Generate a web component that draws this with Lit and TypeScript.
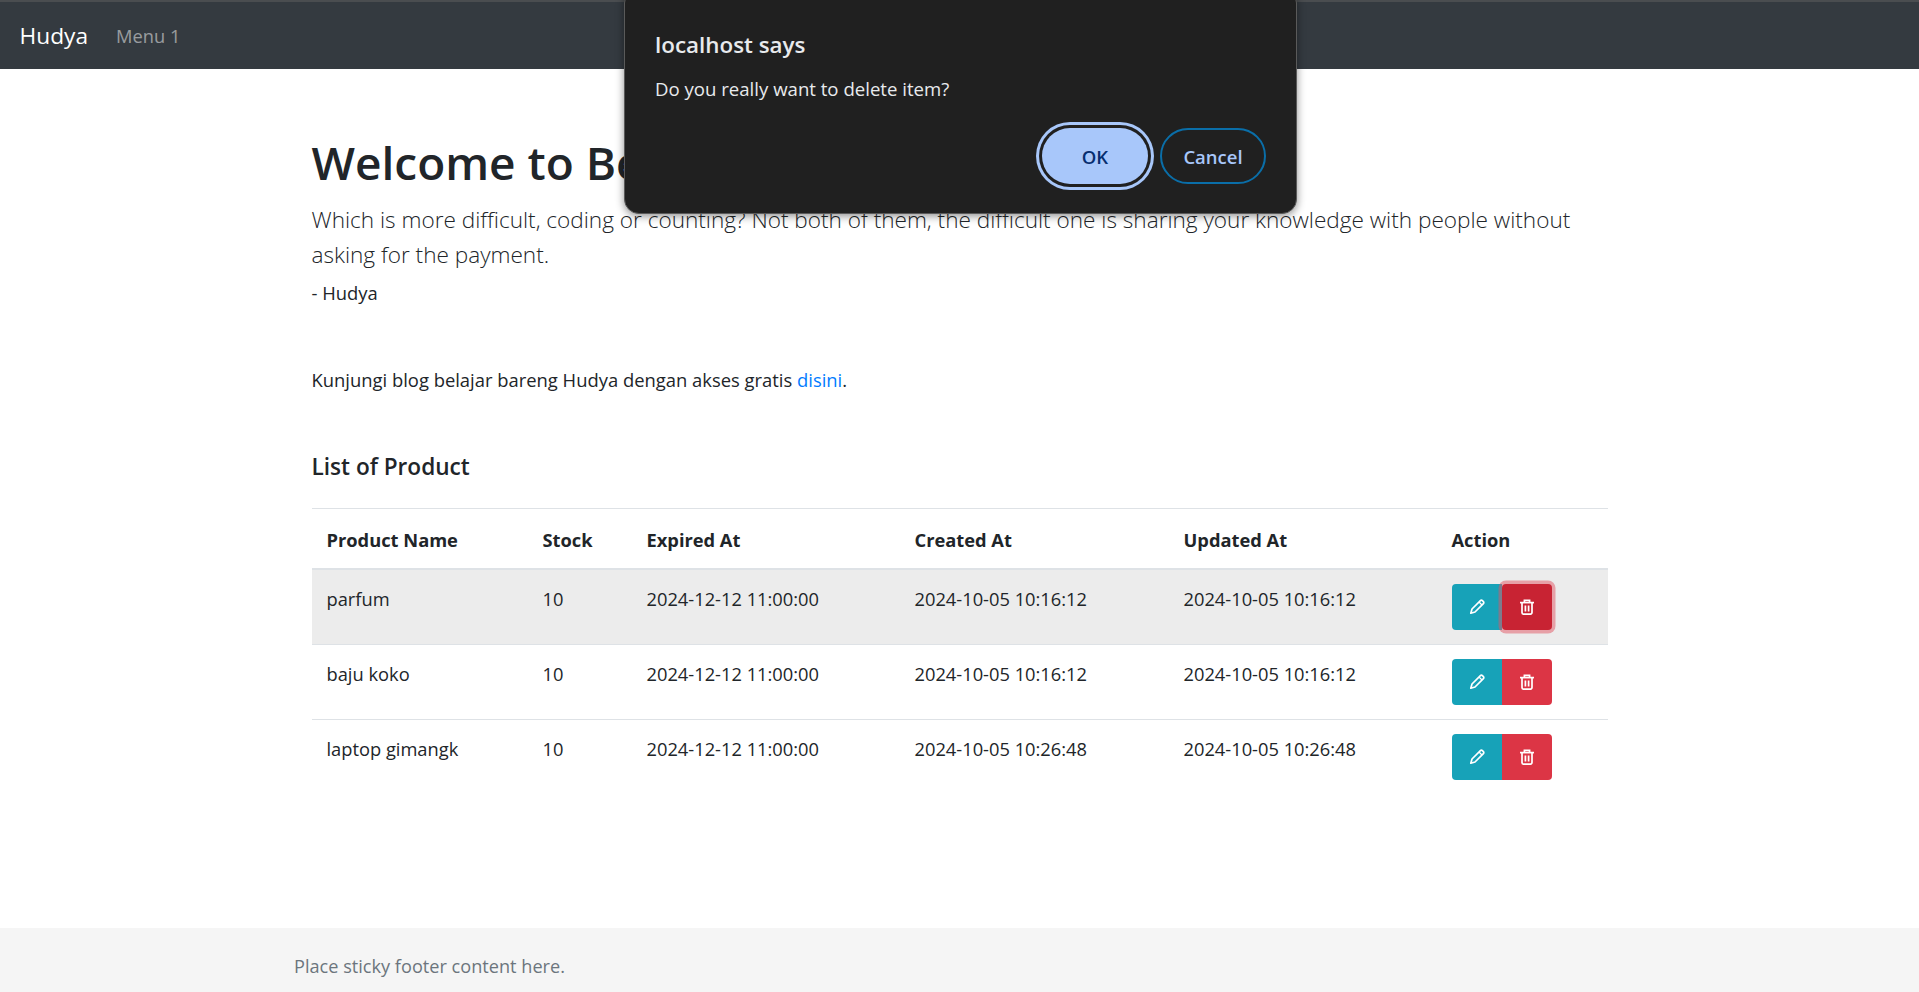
import { LitElement, html, css, svg } from "lit";
import { customElement } from "lit/decorators.js";

const rows = [
  ["parfum", "10", "2024-12-12 11:00:00", "2024-10-05 10:16:12", "2024-10-05 10:16:12"],
  ["baju koko", "10", "2024-12-12 11:00:00", "2024-10-05 10:16:12", "2024-10-05 10:16:12"],
  ["laptop gimangk", "10", "2024-12-12 11:00:00", "2024-10-05 10:26:48", "2024-10-05 10:26:48"],
];

const pencil = svg`<path d="M1.8 14.2 3 10 11.4 1.6a1.4 1.4 0 0 1 2 0l1 1a1.4 1.4 0 0 1 0 2L6 13z" fill="none" stroke="currentColor" stroke-width="1.7" stroke-linejoin="round"/><path d="M10 3l3 3" fill="none" stroke="currentColor" stroke-width="1.3"/>`;
const trash = svg`<g fill="none" stroke="currentColor" stroke-width="1.7"><path d="M1 3.6h14"/><path d="M5.4 3.6V1.4h5.2v2.2"/><path d="M3 3.6V13.4a1.8 1.8 0 0 0 1.8 1.8h6.4a1.8 1.8 0 0 0 1.8-1.8V3.6"/><path d="M6.4 6.4v6M9.6 6.4v6"/></g>`;

@customElement("app-root")
export class AppRoot extends LitElement {
  static styles = css`
    :host { display: flex; flex-direction: column; min-height: 992px; position: relative; overflow: hidden;
      font-family: "Open Sans", "Noto Sans", sans-serif; font-size: 18.4px; color: #212529; background: #fff; }
    .nav { height: 69px; box-sizing: border-box; background: #343a40; border-top: 2px solid #4a4d50; display: flex; align-items: center; padding: 0 20px 0 19.5px; gap: 28px; }
    .brand { color: #fff; font-size: 22.7px; }
    .menu { color: rgba(255,255,255,.5); font-size: 18.3px; }
    main { flex: 1; width: 1296px; margin: 0 auto; padding-top: 63px; box-sizing: border-box; }
    h1 { margin: 0; font-size: 46px; font-weight: 600; line-height: 60px; }
    .lead { margin: 9.5px 0 0; font-size: 22.58px; font-weight: 300; line-height: 35.5px; }
    .who { margin: 7px 0 0; line-height: 26px; }
    .visit { margin: 61px 0 0; line-height: 26px; }
    a { color: #007bff; text-decoration: none; }
    h2 { margin: 58px 0 0; font-size: 22.6px; line-height: 32px; font-weight: 600; }
    table { width: 1296px; margin-top: 25.5px; border-collapse: collapse; table-layout: fixed; font-size: 18.3px; color: #212529; }
    .c1 { width: 216px; } .c2 { width: 104px; } .c3 { width: 268px; } .c4 { width: 269px; } .c5 { width: 268px; } .c6 { width: 171px; }
    th, td { text-align: left; padding: 0 15px; vertical-align: top; }
    thead th { border-top: 1px solid #dee2e6; border-bottom: 2px solid #dee2e6; height: 60px; font-weight: 700; vertical-align: middle; box-sizing: border-box; padding-top: 2px; }
    tbody td { border-bottom: 1px solid #dee2e6; height: 75px; box-sizing: border-box; padding-top: 16px; line-height: 26px; }
    tbody tr:last-child td { border-bottom: 0; }
    tr.hl td { background: #ececec; height: 76px; }
    td.act { padding-top: 14px; }
    .btns { display: flex; }
    .btn { width: 50px; height: 46px; border-radius: 4px; display: flex; align-items: center; justify-content: center; color: #fff; }
    .btn svg { width: 16px; height: 16px; }
    .info { background: #17a2b8; border-radius: 4px 0 0 4px; }
    .danger { background: #dc3545; border-radius: 0 4px 4px 0; }
    .danger.focus { background: #c82333; box-shadow: 0 0 0 3.5px rgba(225,83,97,.5); border-radius: 4px; position: relative; }
    footer { height: 64px; background: #f5f5f5; padding: 11px 0 0 294px; display: flex; align-items: center; color: #6c757d; box-sizing: border-box; font-size: 18.15px; }
    .dlg { position: absolute; left: 624px; top: -12px; width: 673px; height: 226px; box-sizing: border-box; background: #202020; border: 1px solid #5a5a5a; border-radius: 15px; box-shadow: 0 2px 8px rgba(0,0,0,.45); color: #e8eaed; padding: 40px 30px 0 30px; }
    .dlg .t { font-size: 22.4px; font-weight: 600; line-height: 32px; }
    .dlg .m { font-size: 18.6px; line-height: 28px; margin-top: 14px; }
    .acts { display: flex; justify-content: flex-end; gap: 12px; margin-top: 25px; }
    .b { width: 106px; height: 56px; border-radius: 28px; box-sizing: border-box; display: flex; align-items: center; justify-content: center; font-size: 18.5px; font-weight: 600; }
    .ok { background: #a8c7fa; color: #062e6f; box-shadow: 0 0 0 3px #202020, 0 0 0 6px #a8c7fa; }
    .cancel { color: #a8c7fa; border: 2px solid #0a6ea8; }
  `;

  render() {
    return html`
      <div class="nav"><span class="brand">Hudya</span><span class="menu">Menu 1</span></div>
      <main>
        <h1>Welcome to Belajar Bareng Hudya</h1>
        <p class="lead">Which is more difficult, coding or counting? Not both of them, the difficult one is sharing your knowledge with people without asking for the payment.</p>
        <p class="who">- Hudya</p>
        <p class="visit">Kunjungi blog belajar bareng Hudya dengan akses gratis <a>disini</a>.</p>
        <h2>List of Product</h2>
        <table>
          <colgroup>
            <col class="c1" /><col class="c2" /><col class="c3" /><col class="c4" /><col class="c5" /><col class="c6" />
          </colgroup>
          <thead><tr><th>Product Name</th><th>Stock</th><th>Expired At</th><th>Created At</th><th>Updated At</th><th>Action</th></tr></thead>
          <tbody>
            ${rows.map((r, i) => html`<tr class=${i === 0 ? "hl" : ""}>
              ${r.map((c) => html`<td>${c}</td>`)}
              <td class="act"><div class="btns">
                <div class="btn info"><svg viewBox="0 0 16 16">${pencil}</svg></div>
                <div class="btn danger ${i === 0 ? "focus" : ""}"><svg viewBox="0 0 16 16">${trash}</svg></div>
              </div></td>
            </tr>`)}
          </tbody>
        </table>
      </main>
      <footer>Place sticky footer content here.</footer>
      <div class="dlg">
        <div class="t">localhost says</div>
        <div class="m">Do you really want to delete item?</div>
        <div class="acts"><div class="b ok">OK</div><div class="b cancel">Cancel</div></div>
      </div>
    `;
  }
}
